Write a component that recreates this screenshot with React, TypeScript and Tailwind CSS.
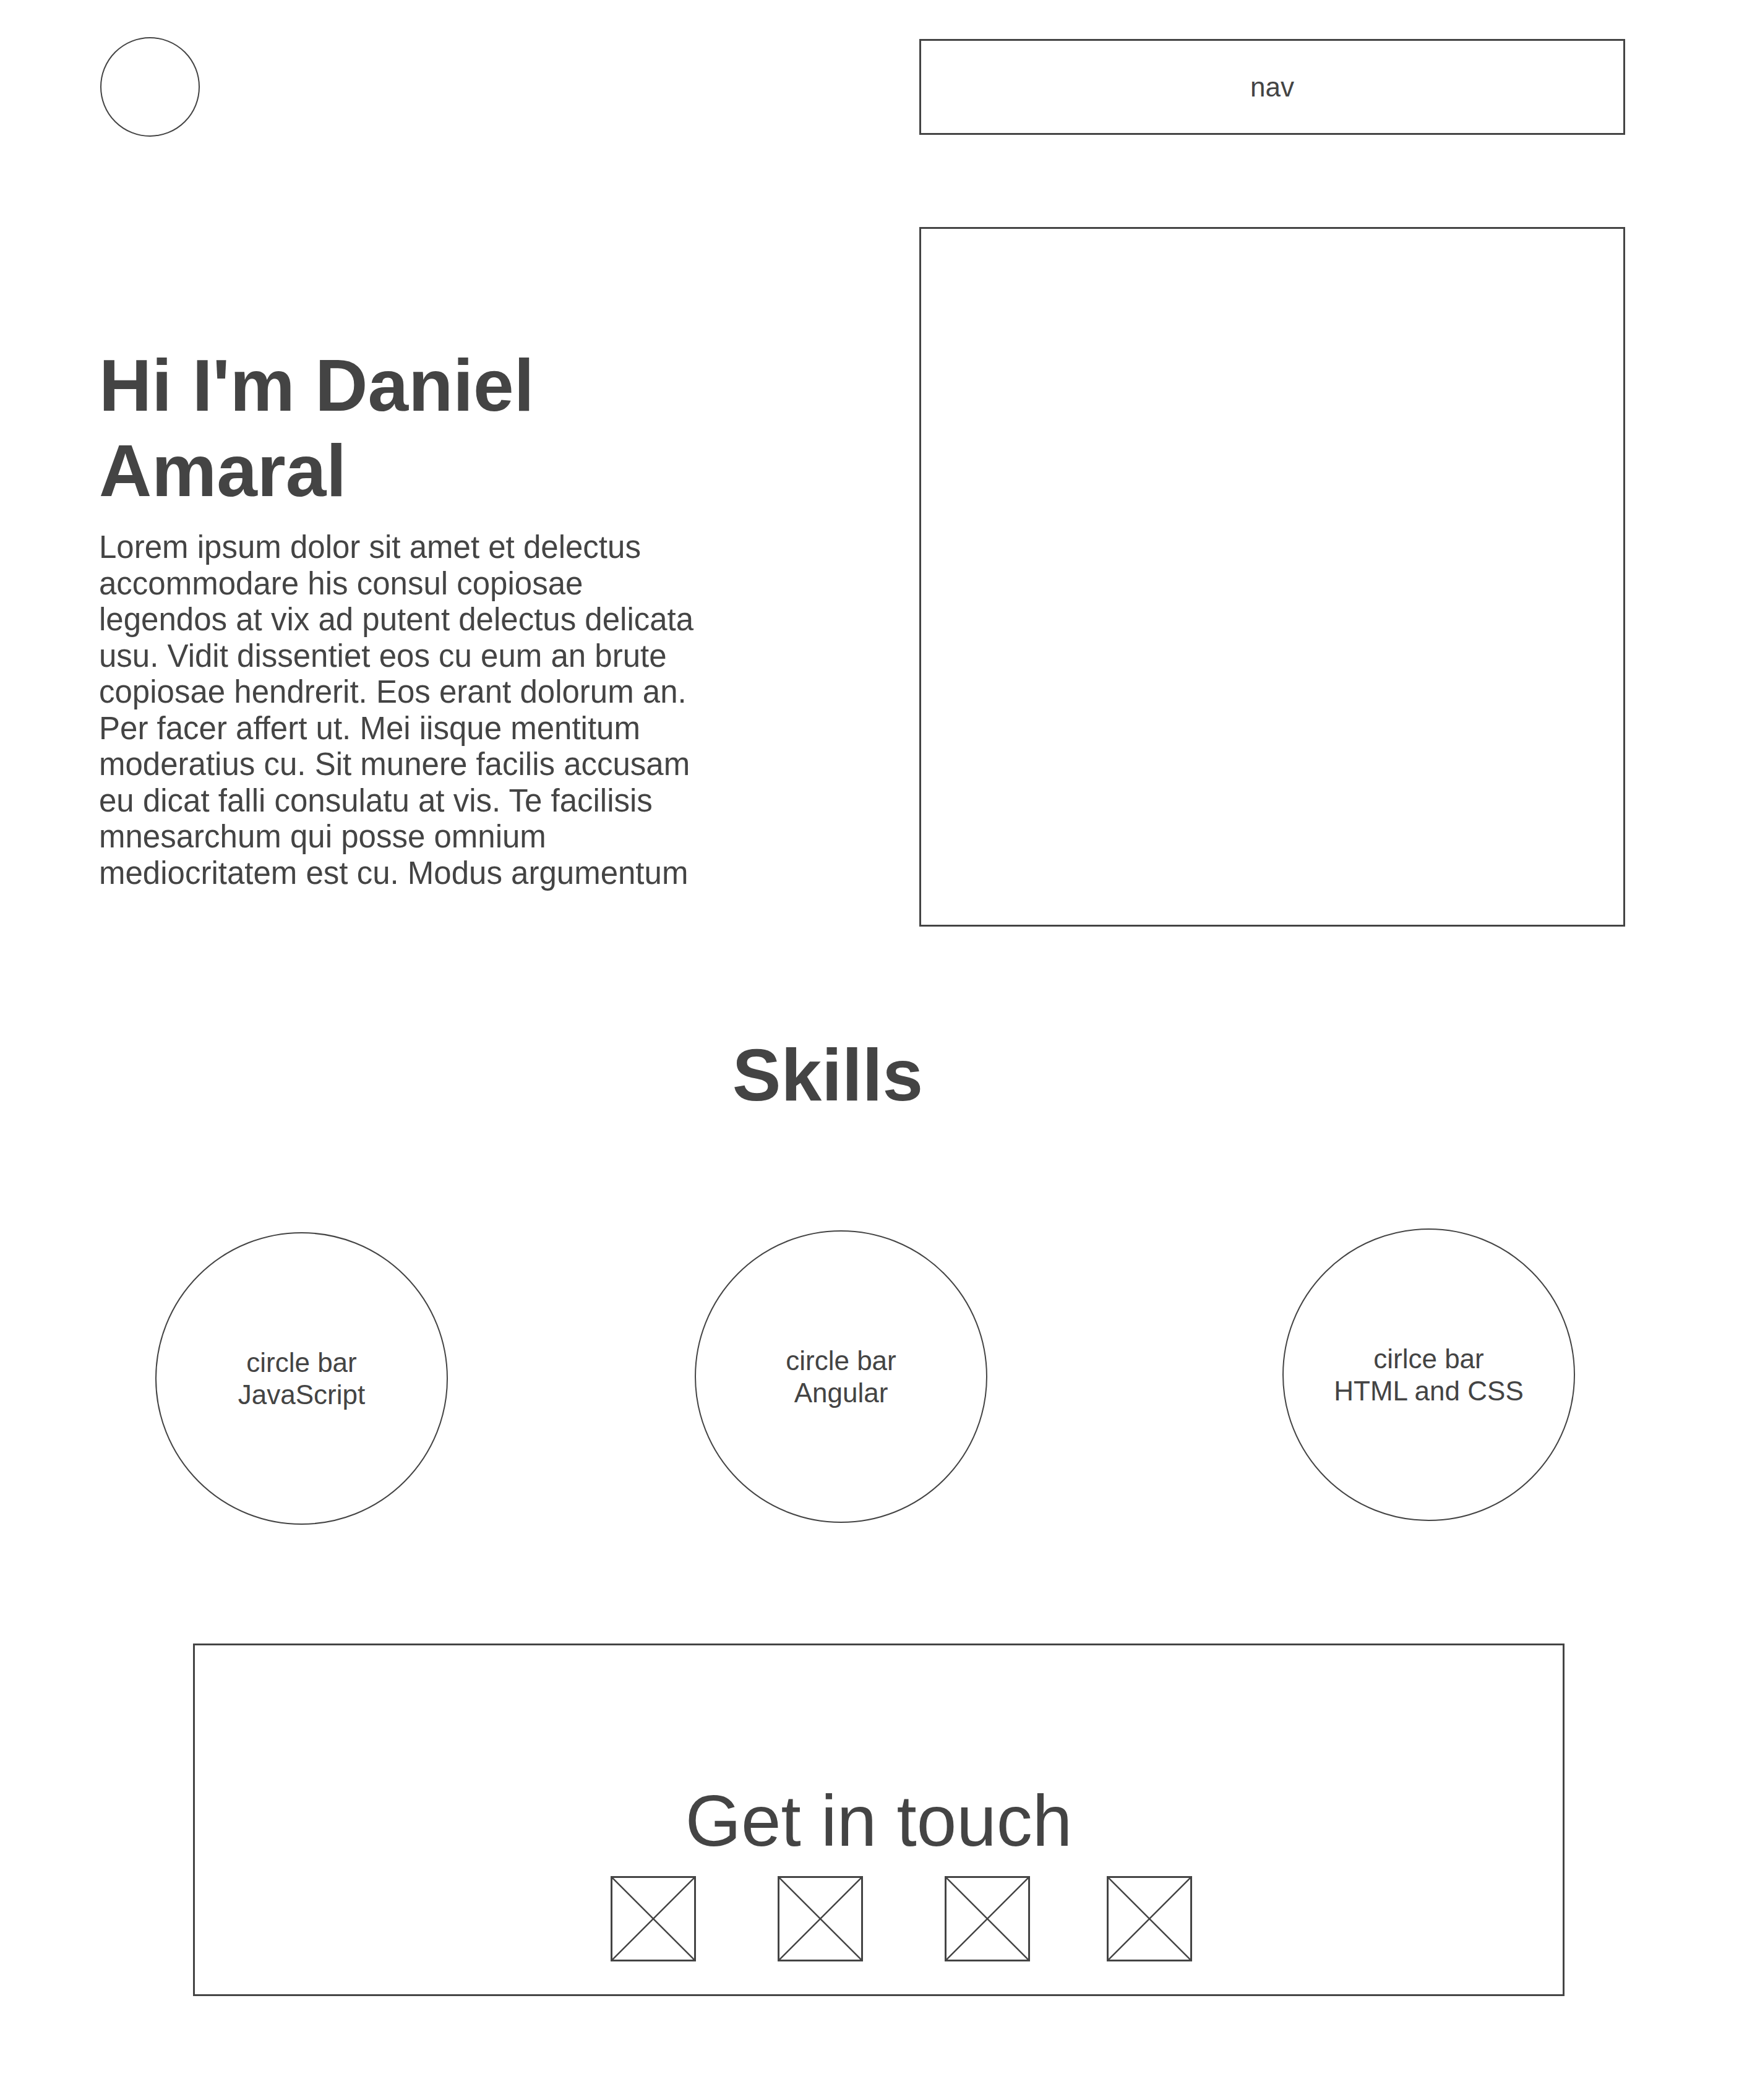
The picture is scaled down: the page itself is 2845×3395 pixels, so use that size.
const skills = [
  { top: "circle bar", bottom: "JavaScript", className: "ml-0 mt-[3px]" },
  { top: "circle bar", bottom: "Angular", className: "ml-[399px]" },
  { top: "cirlce bar", bottom: "HTML and CSS", className: "ml-[477px] -mt-[3px]" },
];

const socials = ["ml-0", "ml-[132px]", "ml-[132px]", "ml-[124px]"];

function Placeholder({ className }: { className: string }) {
  return (
    <div className={`w-[138px] h-[138px] border-[3px] border-[#444] ${className}`}>
      <svg viewBox="0 0 132 132" className="w-full h-full block" preserveAspectRatio="none">
        <line x1="0" y1="0" x2="132" y2="132" stroke="#444" strokeWidth="2.5" />
        <line x1="132" y1="0" x2="0" y2="132" stroke="#444" strokeWidth="2.5" />
      </svg>
    </div>
  );
}

function App() {
  return (
    <div className="min-h-screen bg-white text-[#444] font-['Liberation_Sans',Arial,sans-serif] pb-[169px]">
      {/* header */}
      <header className="flex items-center justify-between pt-[60px] pl-[162px] pr-[218px]">
        <div className="w-[161px] h-[161px] rounded-full border-2 border-[#444]" />
        <nav className="w-[1141px] h-[155px] border-[3px] border-[#444] flex items-center justify-center text-[44px]">
          nav
        </nav>
      </header>

      {/* hero */}
      <section className="flex justify-between mt-[146px] pl-[160px] pr-[218px]">
        <div className="w-[990px] pt-[187px]">
          <h1 className="text-[118px] leading-[138px] font-bold">Hi I'm Daniel Amaral</h1>
          <p className="mt-[26px] text-[51px] leading-[58.5px]">
            Lorem ipsum dolor sit amet et delectus accommodare his consul copiosae legendos at vix ad
            putent delectus delicata usu. Vidit dissentiet eos cu eum an brute copiosae hendrerit. Eos
            erant dolorum an. Per facer affert ut. Mei iisque mentitum moderatius cu. Sit munere facilis
            accusam eu dicat falli consulatu at vis. Te facilisis mnesarchum qui posse omnium
            mediocritatem est cu. Modus argumentum
          </p>
        </div>
        <div className="w-[1141px] h-[1131px] border-[3px] border-[#444]" />
      </section>

      {/* skills */}
      <section className="mt-[171px]">
        <h2 className="pr-[169px] text-center text-[118px] leading-[138px] font-bold">Skills</h2>
        <div className="flex items-start mt-[182px] pl-[251px]">
          {skills.map((s, i) => (
            <div
              key={i}
              className={`w-[473px] h-[473px] rounded-full border-2 border-[#444] flex flex-col items-center justify-center text-center text-[44px] leading-[52px] ${s.className}`}
            >
              <span>{s.top}</span>
              <span>{s.bottom}</span>
            </div>
          ))}
        </div>
      </section>

      {/* contact */}
      <section className="mt-[192px] ml-[312px] w-[2217px] border-[3px] border-[#444] pt-[226px] pb-[53px]">
        <h3 className="text-center text-[116px] leading-[116px]">Get in touch</h3>
        <div className="flex mt-[31px] pl-[672px]">
          {socials.map((c, i) => (
            <Placeholder key={i} className={c} />
          ))}
        </div>
      </section>
    </div>
  );
}

export default App;
